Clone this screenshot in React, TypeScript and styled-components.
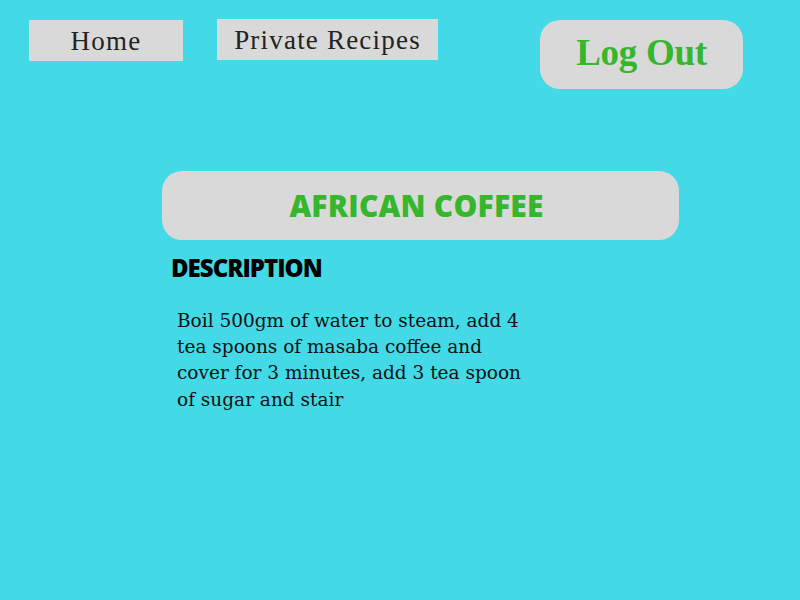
import React from "react";
import styled, { createGlobalStyle } from "styled-components";

const Global = createGlobalStyle`
  html, body { margin: 0; padding: 0; background: #43d9e6; }
  body { width: 800px; height: 600px; overflow: hidden; }
`;

const Page = styled.div`
  width: 800px;
  height: 600px;
  background: #43d9e6;
  display: flex;
  flex-direction: column;
`;

const NavBar = styled.nav`
  display: flex;
  align-items: flex-start;
  padding: 19px 57px 0 29px;
`;

const NavLink = styled.a<{ $w: number; $top: number }>`
  box-sizing: border-box;
  width: ${(p) => p.$w}px;
  height: 41px;
  margin-top: ${(p) => p.$top}px;
  background: #d9d9d9;
  color: #222;
  font-family: "Liberation Serif", serif;
  font-size: 27px;
  letter-spacing: 1.2px;
  line-height: 27px;
  padding-top: 8px;
  text-align: center;
  text-decoration: none;
  & + & { margin-left: 34px; }
`;

const LogOut = styled.button`
  margin-left: auto;
  margin-top: 1px;
  width: 203px;
  height: 69px;
  border: none;
  border-radius: 20px;
  background: #d9d9d9;
  color: #36b62c;
  font-family: "Liberation Serif", serif;
  font-weight: 700;
  font-size: 37px;
  letter-spacing: -0.3px;
  padding: 0 0 4px;
`;

const Main = styled.main`
  margin: 82px 0 0 162px;
  width: 517px;
  display: flex;
  flex-direction: column;
`;

const TitleCard = styled.div`
  height: 69px;
  border-radius: 20px;
  background: #d9d9d9;
  display: flex;
  align-items: center;
  justify-content: center;
  padding-right: 8px;
`;

const Title = styled.h1`
  margin: 0;
  color: #36b62c;
  font-family: "Open Sans", sans-serif;
  font-weight: 800;
  font-size: 30px;
  letter-spacing: 0.2px;
`;

const SectionHeading = styled.h2`
  margin: 13px 0 0 9px;
  color: #000;
  font-family: "Open Sans", sans-serif;
  font-weight: 800;
  font-size: 24px;
  letter-spacing: -1px;
  line-height: 30px;
`;

const Description = styled.p`
  margin: 25px 0 0 15px;
  width: 350px;
  color: #111;
  font-family: "DejaVu Serif", serif;
  font-size: 18.5px;
  line-height: 26.2px;
`;

export default function App() {
  return (
    <Page>
      <Global />
      <NavBar>
        <NavLink href="#" $w={154} $top={1}>Home</NavLink>
        <NavLink href="#" $w={221} $top={0}>Private Recipes</NavLink>
        <LogOut>Log Out</LogOut>
      </NavBar>
      <Main>
        <TitleCard>
          <Title>AFRICAN COFFEE</Title>
        </TitleCard>
        <SectionHeading>DESCRIPTION</SectionHeading>
        <Description>
          Boil 500gm of water to steam, add 4 tea spoons of masaba coffee and
          cover for 3 minutes, add 3 tea spoon of sugar and stair
        </Description>
      </Main>
    </Page>
  );
}
